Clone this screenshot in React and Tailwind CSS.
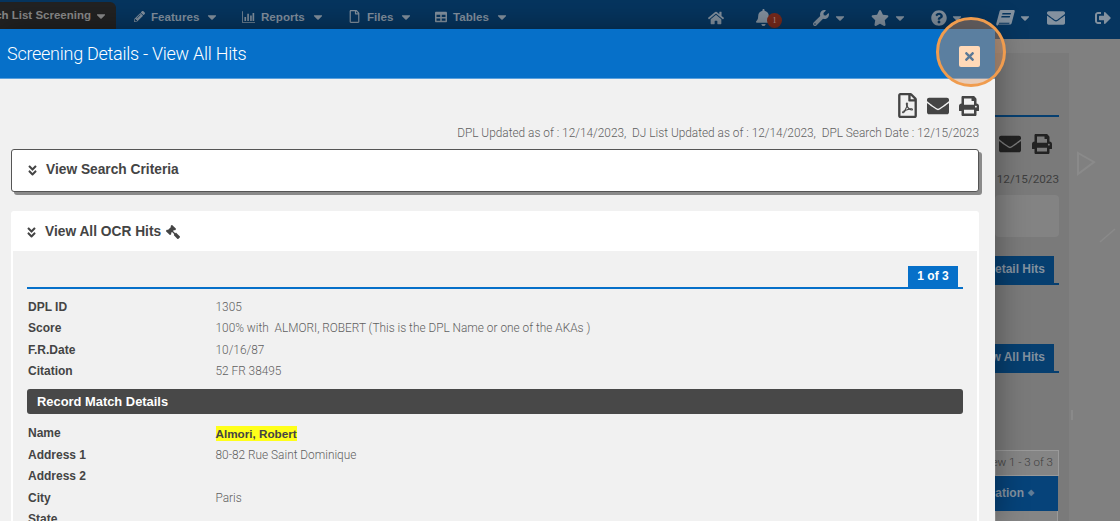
import React from 'react';
import {
  FaHome, FaBell, FaWrench, FaStar, FaQuestionCircle, FaEnvelope, FaSignOutAlt,
  FaPencilAlt, FaRegFile, FaTable, FaPrint, FaGavel, FaAngleDoubleDown, FaTimes, FaCaretDown, FaRegFilePdf,
} from 'react-icons/fa';

const font = { fontFamily: '"Liberation Sans", Arial, sans-serif' };
const light = { fontFamily: 'Roboto, "Liberation Sans", sans-serif' };

function BarChartIcon({ size = 14 }) {
  return (
    <svg width={size} height={size} viewBox="0 0 16 14" fill="currentColor">
      <path d="M0 0h1v13h15v1H0z" />
      <path d="M3 7h2v5H3zM6.500 3h2v9h-2zM10 5h2v7h-2zM13 2h2v10h-2z" />
    </svg>
  );
}

function BookIcon() {
  return (
    <svg width="19" height="16" viewBox="0 0 19 16" fill="currentColor">
      <path fillRule="evenodd" d="M5 0h12.500c1 0 1.500.7 1.200 1.600l-3 11.400c-.3 1-1 1.500-2 1.500H3c-.8 0-1.200.5-1 1h-.500C.5 15.500 0 14.500.3 13.400L3.500 1.500C3.800.5 4.200 0 5 0zm1.500 3l-.4 1.500h8.500l.4-1.500zM5.600 6l-.4 1.500h8.500l.4-1.500zM3.300 12.800c-.4 0-.6.2-.6.5s.2.500.6.500h9.900l.4-1z" />
    </svg>
  );
}

function NavItem({ icon, label, width, iconBox = 'w-[13px]' }) {
  return (
    <div className={`flex items-center gap-[6px] text-[11.600px] font-bold text-[#83919f] ${width}`}>
      <span className={`flex justify-center ${iconBox}`}>{icon}</span>
      <span>{label}</span>
      <FaCaretDown size={14} />
    </div>
  );
}

function Row({ label, value, children }) {
  return (
    <div className="flex h-[21.5px] items-center whitespace-pre text-[12px]">
      <div className="w-[187.500px] font-bold text-[#444]">{label}</div>
      <div className="translate-y-px text-[11.850px] font-light text-[#5f5f5f]" style={light}>{children || value}</div>
    </div>
  );
}

function BehindTab({ label }) {
  return (
    <div className="flex w-[64px] flex-col">
      <div className="flex h-[27px] w-[59px] items-center justify-end whitespace-nowrap bg-[#063f70] pr-[9px] text-[12px] font-bold text-[#83919f]">
        {label}
      </div>
      <div className="h-[2px] w-full bg-[#063f70]" />
    </div>
  );
}

// what the page shows behind the dialog, dimmed
function Background() {
  return (
    <div className="ml-auto mr-[51px] mt-[14px] flex h-[468px] w-[200px] flex-col items-end bg-[#7a7a7a] pr-[10px]">
      <div className="mt-[62px] h-[2px] w-[64px] bg-[#063f70]" />
      <div className="mt-[16px] flex items-center gap-[11px] pr-[7px] text-[#222]">
        <FaEnvelope size={22} />
        <FaPrint size={20} />
      </div>
      <div className="mt-[16px] text-[11.700px] text-[#3e3e3e]" style={light}>12/15/2023</div>
      <div className="mt-[6px] h-[42px] w-[64px] rounded bg-[#838383]" />
      <div className="mt-[19px]"><BehindTab label="Detail Hits" /></div>
      <div className="mt-[59px]"><BehindTab label="View All Hits" /></div>
      <div className="mt-[77px] flex h-[26px] w-[64px] items-center justify-end whitespace-nowrap border border-[#9a9a9a] bg-[#858585] pr-[5px] text-[11.500px] font-light text-[#3e3e3e]" style={light}>
        View 1 - 3 of 3
      </div>
      <div className="mr-px flex h-[35px] w-[63px] items-center justify-end gap-[4px] whitespace-nowrap bg-[#06437a] pr-[24px] text-[12px] font-bold text-[#83919f]">
        Location
        <span className="text-[8px] text-[#5f7d98]">◆</span>
      </div>
      <div className="mr-px h-[10px] w-[63px] border-x border-[#9a9a9a] bg-[#858585]" />
    </div>
  );
}

export default function App() {
  return (
    <div className="relative h-[521px] w-[1120px] overflow-hidden bg-[#808080]" style={font}>
      {/* nav */}
      <div className="flex h-[39px] items-start bg-[#06355f]">
        <div className="mt-[2px] flex h-[27px] w-[116px] items-center justify-end gap-[3px] overflow-hidden rounded-tr-md bg-[#222] pr-[8px] text-[11.500px] font-bold text-[#8a8a8a]">
          <span className="whitespace-nowrap">ch List Screening</span>
          <FaCaretDown size={14} className="shrink-0" />
        </div>
        <div className="ml-[18px] flex h-[34px] items-center">
          <NavItem width="w-[108px]" iconBox="w-[11px]" icon={<FaPencilAlt size={11} />} label="Features" />
          <NavItem width="w-[106px]" icon={<BarChartIcon />} label="Reports" />
          <NavItem width="w-[86px]" icon={<FaRegFile size={13} />} label="Files" />
          <NavItem width="w-[80px]" icon={<FaTable size={12} />} label="Tables" />
        </div>
        <div className="ml-[194px] flex h-[35px] items-center text-[#83919f]">
          <div className="w-[47px]"><FaHome size={16} /></div>
          <div className="relative w-[58px]">
            <FaBell size={17} />
            <span className="absolute left-[12px] top-[4px] flex h-[15px] w-[15px] items-center justify-center rounded-full bg-[#7a2a1c] text-[8px] text-[#c09a90]" style={{ fontFamily: '"Liberation Serif", serif' }}>1</span>
          </div>
          <div className="flex w-[58px] items-center gap-[4px]"><FaWrench size={16} /><FaCaretDown size={14} /></div>
          <div className="flex w-[60px] items-center gap-[4px]"><FaStar size={18} /><FaCaretDown size={14} /></div>
          <div className="flex w-[65px] items-center gap-[3px]"><FaQuestionCircle size={16} /><FaCaretDown size={14} /></div>
          <div className="flex w-[51px] items-center gap-[3px]"><BookIcon /><FaCaretDown size={14} /></div>
          <div className="w-[48px]"><FaEnvelope size={18} /></div>
          <FaSignOutAlt size={16} />
        </div>
      </div>

      <Background />

      {/* faint marks on the right of the page */}
      <svg className="absolute left-[1070px] top-[145px]" width="50" height="280" fill="none" stroke="#8a8a8a" strokeWidth="2">
        <path d="M8 8l16 9-16 12z" />
        <path d="M30 97l15-13" strokeWidth="1.500" />
        <path d="M2 265v10" strokeWidth="2" />
      </svg>

      {/* modal */}
      <div className="absolute left-0 top-[29px] h-[492px] w-[995px] bg-[#f1f1f1] shadow-[0_0_30px_rgba(0,0,0,0.4)]">
        <div className="flex h-[50px] items-center border-b border-[#5aa0dc] bg-[#0670c9] pl-[7px] text-[18px] font-light tracking-[-0.27px] text-white" style={light}>
          Screening Details - View All Hits
        </div>
        <div className="flex flex-col pl-[11px] pr-[16px]">
          <div className="mt-[14px] flex items-center justify-end gap-[10px] text-[#444]">
            <FaRegFilePdf size={25} className="-mr-[3px]" />
            <FaEnvelope size={22} />
            <FaPrint size={20} />
          </div>
          <div className="mt-[7px] text-right text-[11.850px] font-light text-[#5f5f5f]" style={light}>
            DPL Updated as of : 12/14/2023,&nbsp; DJ List Updated as of : 12/14/2023,&nbsp; DPL Search Date : 12/15/2023
          </div>
          <div className="mt-[6px] flex h-[43px] items-center gap-[7.500px] rounded-[3px] border border-[#555] bg-white pl-[13.500px] text-[13.750px] font-bold text-[#444] shadow-[3px_3px_0_#8a8a8a]">
            <FaAngleDoubleDown size={13} />
            View Search Criteria
          </div>
          <div className="mt-[19px] rounded-[3px] border-x-2 border-white">
            <div className="flex h-[40px] items-center gap-[7.500px] bg-white pl-[11.500px] pt-[3px] text-[13.750px] font-bold text-[#444]">
              <FaAngleDoubleDown size={13} />
              <span>View All OCR Hits</span>
              <FaGavel size={14} className="-ml-[3px] -scale-x-100" />
            </div>
            <div className="px-[14px]">
              <div className="mt-[15px] flex justify-end border-b-2 border-[#0670c9] pr-[5px]">
                <div className="flex h-[21px] w-[50px] items-center justify-center bg-[#0670c9] text-[12px] font-bold text-white">1 of 3</div>
              </div>
              <div className="ml-[1px] mt-[7px]">
                <Row label="DPL ID" value="1305" />
                <Row label="Score" value="100% with  ALMORI, ROBERT (This is the DPL Name or one of the AKAs )" />
                <Row label="F.R.Date" value="10/16/87" />
                <Row label="Citation" value="52 FR 38495" />
              </div>
              <div className="mt-[7px] flex h-[25px] items-center rounded-[3px] bg-[#484848] pl-[10px] text-[12.900px] font-bold text-white">
                Record Match Details
              </div>
              <div className="ml-[1px] mt-[8.500px]">
                <Row label="Name"><span className="bg-[#ffff1a] py-px text-[11.700px] font-bold text-[#444]" style={font}>Almori, Robert</span></Row>
                <Row label="Address 1" value="80-82 Rue Saint Dominique" />
                <Row label="Address 2" value="" />
                <Row label="City" value="Paris" />
                <Row label="State" value="" />
              </div>
            </div>
          </div>
        </div>
      </div>

      {/* click highlight over the close button */}
      <div className="absolute left-[936px] top-[17px] flex h-[70px] w-[70px] items-center justify-center rounded-full border-[3px] border-[#f09c4e] bg-[#dc9664]/40">
        <div className="-ml-[3px] mt-[9px] flex h-[21px] w-[21px] items-center justify-center rounded-[2px] bg-[#ffd9b8] text-[#5a7896]">
          <FaTimes size={13} />
        </div>
      </div>
    </div>
  );
}
